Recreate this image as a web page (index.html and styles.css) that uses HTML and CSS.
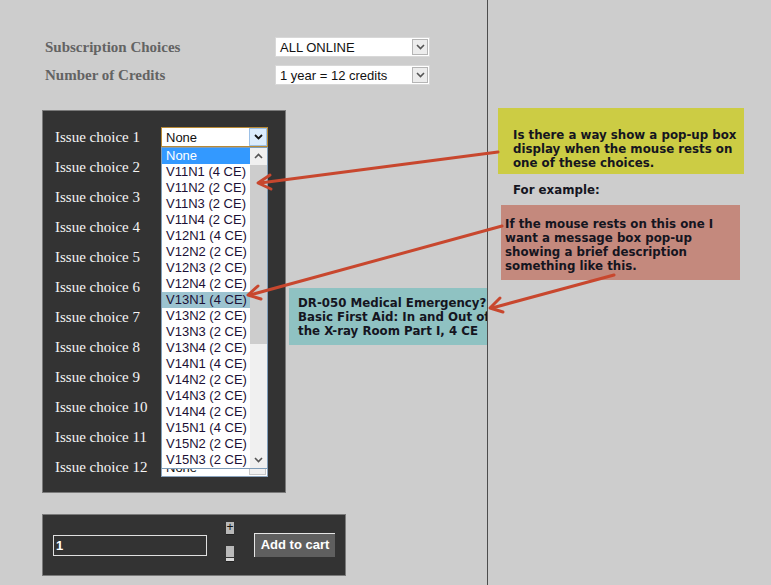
FILE: index.html
```html
<!DOCTYPE html>
<html>
<head>
<meta charset="utf-8">
<link rel="stylesheet" href="styles.css">
</head>
<body>
<div class="page">
  <div class="left">
    <div class="prefs">
      <div class="pref-row">
        <span class="pref-label">Subscription Choices</span>
        <div class="sel sel-pref"><span class="sel-text">ALL ONLINE</span><span class="sel-btn"><svg width="9" height="6" viewBox="0 0 9 6"><polyline points="1,1 4.5,4.5 8,1" fill="none" stroke="#555" stroke-width="1.6"/></svg></span></div>
      </div>
      <div class="pref-row">
        <span class="pref-label">Number of Credits</span>
        <div class="sel sel-pref"><span class="sel-text">1 year = 12 credits</span><span class="sel-btn"><svg width="9" height="6" viewBox="0 0 9 6"><polyline points="1,1 4.5,4.5 8,1" fill="none" stroke="#555" stroke-width="1.6"/></svg></span></div>
      </div>
    </div>

    <div class="panel issues">
      <div class="issue-row"><span class="issue-label">Issue choice 1</span><div class="sel sel-issue sel-focus"><span class="sel-text">None</span><span class="sel-btn sel-btn-focus"><svg width="9" height="6" viewBox="0 0 9 6"><polyline points="1,1 4.5,4.5 8,1" fill="none" stroke="#111" stroke-width="1.8"/></svg></span></div></div>
      <div class="issue-row"><span class="issue-label">Issue choice 2</span><div class="sel sel-issue"></div></div>
      <div class="issue-row"><span class="issue-label">Issue choice 3</span><div class="sel sel-issue"></div></div>
      <div class="issue-row"><span class="issue-label">Issue choice 4</span><div class="sel sel-issue"></div></div>
      <div class="issue-row"><span class="issue-label">Issue choice 5</span><div class="sel sel-issue"></div></div>
      <div class="issue-row"><span class="issue-label">Issue choice 6</span><div class="sel sel-issue"></div></div>
      <div class="issue-row"><span class="issue-label">Issue choice 7</span><div class="sel sel-issue"></div></div>
      <div class="issue-row"><span class="issue-label">Issue choice 8</span><div class="sel sel-issue"></div></div>
      <div class="issue-row"><span class="issue-label">Issue choice 9</span><div class="sel sel-issue"></div></div>
      <div class="issue-row"><span class="issue-label">Issue choice 10</span><div class="sel sel-issue"></div></div>
      <div class="issue-row"><span class="issue-label">Issue choice 11</span><div class="sel sel-issue"></div></div>
      <div class="issue-row"><span class="issue-label">Issue choice 12</span><div class="sel sel-issue"><span class="sel-text">None</span><span class="sel-btn sel-btn-small"><svg width="7" height="5" viewBox="0 0 7 5"><polyline points="1,1 3.5,3.5 6,1" fill="none" stroke="#777" stroke-width="1.2"/></svg></span></div></div>

      <div class="dropdown">
        <ul class="dd-list">
          <li class="dd-item dd-selected">None</li>
          <li class="dd-item">V11N1 (4 CE)</li>
          <li class="dd-item">V11N2 (2 CE)</li>
          <li class="dd-item">V11N3 (2 CE)</li>
          <li class="dd-item">V11N4 (2 CE)</li>
          <li class="dd-item">V12N1 (4 CE)</li>
          <li class="dd-item">V12N2 (2 CE)</li>
          <li class="dd-item">V12N3 (2 CE)</li>
          <li class="dd-item">V12N4 (2 CE)</li>
          <li class="dd-item dd-hover">V13N1 (4 CE)</li>
          <li class="dd-item">V13N2 (2 CE)</li>
          <li class="dd-item">V13N3 (2 CE)</li>
          <li class="dd-item">V13N4 (2 CE)</li>
          <li class="dd-item">V14N1 (4 CE)</li>
          <li class="dd-item">V14N2 (2 CE)</li>
          <li class="dd-item">V14N3 (2 CE)</li>
          <li class="dd-item">V14N4 (2 CE)</li>
          <li class="dd-item">V15N1 (4 CE)</li>
          <li class="dd-item">V15N2 (2 CE)</li>
          <li class="dd-item">V15N3 (2 CE)</li>
        </ul>
        <div class="scrollbar">
          <span class="sb-arrow"><svg width="9" height="6" viewBox="0 0 9 6"><polyline points="1,5 4.5,1.5 8,5" fill="none" stroke="#555" stroke-width="1.6"/></svg></span>
          <span class="sb-thumb"></span>
          <span class="sb-track"></span>
          <span class="sb-arrow"><svg width="9" height="6" viewBox="0 0 9 6"><polyline points="1,1 4.5,4.5 8,1" fill="none" stroke="#555" stroke-width="1.6"/></svg></span>
        </div>
      </div>
    </div>

    <div class="panel cart">
      <div class="qty-input">1</div>
      <div class="steppers">
        <span class="step step-plus">+</span>
        <span class="step step-minus">-</span>
      </div>
      <div class="cart-btn">Add to cart</div>
    </div>
  </div>

  <div class="right">
    <div class="note note-yellow">Is there a way show a pop-up box<br>display when the mouse rests on<br>one of these choices.</div>
    <div class="example">For example:</div>
    <div class="note note-pink">If the mouse rests on this one I<br>want a message box pop-up<br>showing a brief description<br>something like this.</div>
  </div>

  <div class="tooltip">DR-050 Medical Emergency?<br>Basic First Aid: In and Out of<br>the X-ray Room Part I, 4 CE</div>

  <svg class="arrows" width="771" height="585" viewBox="0 0 771 585">
    <g fill="none" stroke="#c8472e" stroke-width="3" stroke-linecap="round" stroke-linejoin="round">
      <line x1="498" y1="152" x2="260" y2="183"/>
      <polyline points="270,175 258,183 271,189"/>
      <line x1="502" y1="226" x2="250" y2="295"/>
      <polyline points="258,286 248,295 261,299"/>
      <line x1="614" y1="275" x2="492" y2="308"/>
      <polyline points="500,298 490,308 503,312"/>
    </g>
  </svg>
</div>
</body>
</html>
```

FILE: styles.css
```css
* { box-sizing: border-box; }
html, body { margin: 0; padding: 0; }
body {
  background: #cdcdcd;
  width: 771px;
  height: 585px;
  overflow: hidden;
}
.page {
  position: relative;
  display: flex;
  width: 771px;
  height: 585px;
}
.left {
  width: 488px;
  height: 585px;
  border-right: 1px solid #4d4d4d;
  display: flex;
  flex-direction: column;
}
.prefs {
  margin-top: 37px;
  padding-left: 45px;
  display: flex;
  flex-direction: column;
  gap: 8px;
}
.pref-row {
  display: flex;
  align-items: center;
  height: 20px;
}
.pref-label {
  width: 230px;
  font-family: "Liberation Serif", "Times New Roman", serif;
  font-weight: bold;
  font-size: 15px;
  color: #636363;
}
.sel {
  position: relative;
  display: flex;
  align-items: center;
  background: #fff;
  height: 20px;
  font-family: "Liberation Sans", Arial, sans-serif;
  font-size: 13px;
  color: #111;
}
.sel-pref {
  width: 155px;
  border: 1px solid #d8d8d8;
}
.sel-text {
  flex: 1;
  padding-left: 4px;
  white-space: nowrap;
  overflow: hidden;
}
.sel-btn {
  width: 16px;
  height: 16px;
  margin-right: 1px;
  display: flex;
  align-items: center;
  justify-content: center;
  background: #ececec;
  border: 1px solid #b5b5b5;
}
.panel {
  background: #333333;
  border: 1px solid #7a7a7a;
  margin-left: 42px;
}
.issues {
  position: relative;
  margin-top: 25px;
  width: 244px;
  height: 383px;
  padding: 11px 0 0 12px;
}
.issue-row {
  display: flex;
  align-items: center;
  height: 30px;
}
.issue-label {
  width: 106px;
  font-family: "Liberation Serif", "Times New Roman", serif;
  font-size: 15px;
  color: #f5f5f5;
  white-space: nowrap;
}
.sel-issue {
  width: 107px;
  border: 1px solid #8aa3bd;
}
.sel-focus {
  border: 1px solid #b88a35;
}
.sel-btn-focus {
  width: 18px;
  height: 18px;
  margin-right: 0;
  background: #dcecfc;
  border: 1px solid #9cc0e6;
}
.sel-btn-small {
  width: 17px;
  height: 16px;
  background: #f0f0f0;
  border: 1px solid #c8c8c8;
  border-top: none;
}
.dropdown {
  position: absolute;
  left: 118px;
  top: 36px;
  width: 107px;
  height: 322px;
  background: #fff;
  border: 1px solid #7f9db9;
  display: flex;
  z-index: 2;
}
.dd-list {
  list-style: none;
  margin: 0;
  padding: 0;
  width: 88px;
}
.dd-item {
  height: 16px;
  line-height: 16px;
  padding-left: 4px;
  font-family: "Liberation Sans", Arial, sans-serif;
  font-size: 13px;
  color: #1c1035;
  white-space: nowrap;
  overflow: hidden;
}
.dd-selected {
  background: #3399ff;
  color: #fff;
}
.dd-hover {
  background: #9cc3d0;
}
.scrollbar {
  width: 17px;
  display: flex;
  flex-direction: column;
  background: #f0f0f0;
}
.sb-arrow {
  height: 16px;
  display: flex;
  align-items: center;
  justify-content: center;
  background: #f0f0f0;
}
.sb-thumb {
  height: 179px;
  margin: 1px 0 0 0;
  background: #cdcdcd;
}
.sb-track {
  flex: 1;
}
.cart {
  margin-top: 21px;
  width: 304px;
  height: 62px;
  display: flex;
  align-items: center;
  padding-left: 10px;
}
.qty-input {
  width: 154px;
  height: 21px;
  border: 1px solid #e0e0e0;
  background: #333;
  color: #fff;
  font-family: "Liberation Sans", Arial, sans-serif;
  font-weight: bold;
  font-size: 13px;
  line-height: 19px;
  padding-left: 2px;
}
.steppers {
  margin-left: 19px;
  width: 8px;
  display: flex;
  flex-direction: column;
  gap: 11px;
  margin-top: -6px;
}
.step {
  display: block;
  width: 8px;
  background: #b9b9b9;
  color: #111;
  font-family: "Liberation Sans", Arial, sans-serif;
  font-size: 12px;
  line-height: 11px;
  text-align: center;
  border-bottom: 1px solid #222;
}
.step-plus { height: 13px; }
.step-minus {
  height: 16px;
  box-shadow: inset 0 -3px 0 #d8d8d8, inset 0 -4px 0 #333;
  color: #b9b9b9;
}
.cart-btn {
  margin-left: 20px;
  width: 81px;
  height: 24px;
  background: #5f5f5f;
  border-top: 1px solid #e6e6e6;
  border-left: 1px solid #e6e6e6;
  color: #fff;
  font-family: "Liberation Sans", Arial, sans-serif;
  font-weight: bold;
  font-size: 13px;
  line-height: 22px;
  text-align: center;
}
.right {
  flex: 1;
  display: flex;
  flex-direction: column;
  align-items: flex-start;
  padding-top: 108px;
  font-family: "DejaVu Sans", Verdana, sans-serif;
  font-weight: bold;
  font-size: 11.8px;
  line-height: 14px;
  color: #15151f;
}
.note { white-space: nowrap; }
.note-yellow {
  margin-left: 10px;
  width: 246px;
  height: 66px;
  background: #cccc44;
  padding: 20px 0 0 15px;
}
.example {
  margin: 9px 0 0 25px;
}
.note-pink {
  margin: 8px 0 0 13px;
  width: 239px;
  height: 75px;
  background: #c4897d;
  padding: 12px 0 0 4px;
}
.tooltip {
  position: absolute;
  left: 289px;
  top: 288px;
  width: 198px;
  height: 57px;
  background: #8fc2c2;
  padding: 8px 0 0 9px;
  overflow: hidden;
  white-space: nowrap;
  font-family: "DejaVu Sans", Verdana, sans-serif;
  font-weight: bold;
  font-size: 11.8px;
  line-height: 14px;
  color: #15151f;
}
.arrows {
  position: absolute;
  left: 0;
  top: 0;
  pointer-events: none;
  z-index: 5;
}
```
